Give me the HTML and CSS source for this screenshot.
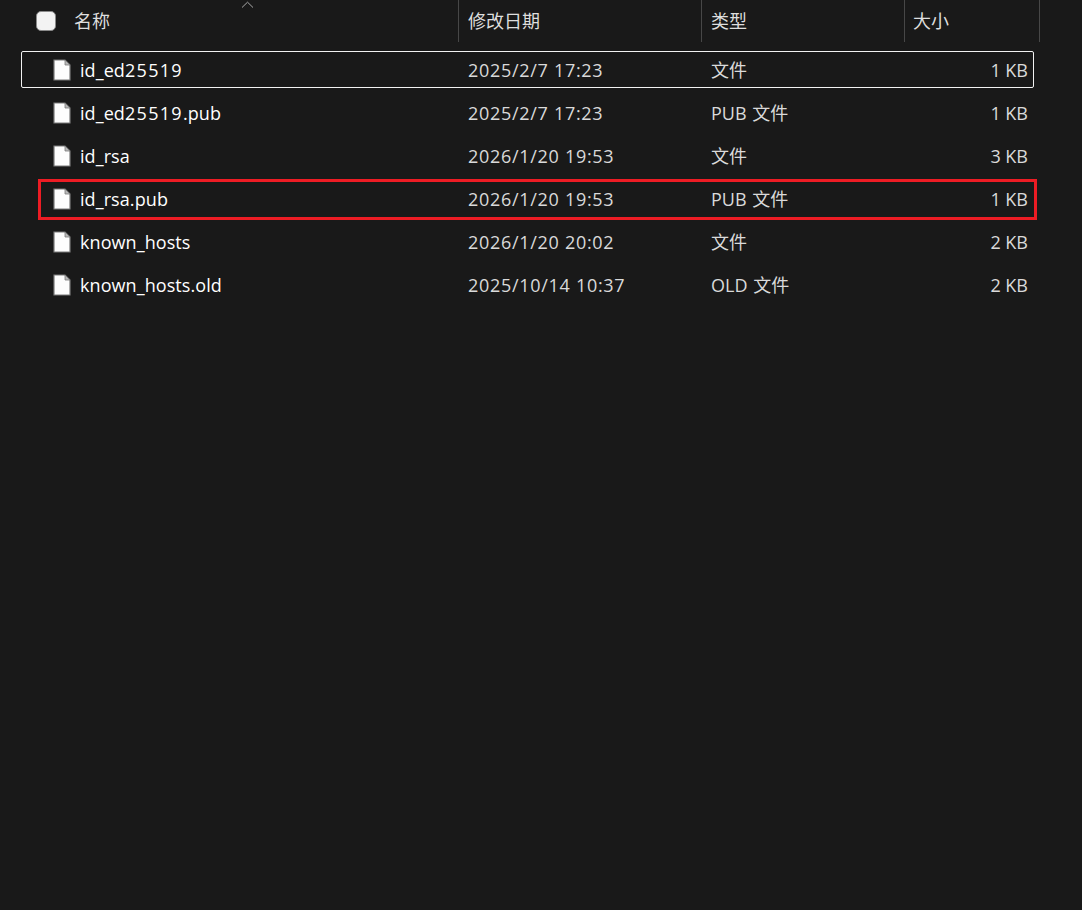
FILE: index.html
```html
<!DOCTYPE html>
<html lang="zh-CN">
<head>
<meta charset="utf-8">
<title>.ssh</title>
<link rel="stylesheet" href="styles.css">
</head>
<body>
<svg class="defs" width="0" height="0" aria-hidden="true">
  <symbol id="file" viewBox="0 0 18 22">
    <path d="M1 1H12L17 6V21H1Z" fill="#fdfdfd" stroke="#7a7a7a" stroke-width="1.2"/>
    <path d="M12 1V6H17Z" fill="#b9b9b9" stroke="#7a7a7a" stroke-width="0.8"/>
  </symbol>
</svg>
<main class="explorer">
  <header class="head">
    <div class="hcell hname">
      <span class="check"></span>
      <span>名称</span>
      <svg class="sort" width="13" height="7" viewBox="0 0 13 7"><path d="M1 6.5L6.5 1.2L12 6.5" fill="none" stroke="#a8a8a8" stroke-width="1"/></svg>
    </div>
    <div class="hcell">修改日期</div>
    <div class="hcell">类型</div>
    <div class="hcell hsize">大小</div>
  </header>
  <section class="rows">
    <div class="row focus">
      <div class="name"><svg class="ficon"><use href="#file"/></svg><span>id_ed<span class="num">25519</span></span></div>
      <div class="cell date">2025/2/7 17:23</div><div class="cell type">文件</div><div class="cell size">1 KB</div>
    </div>
    <div class="row">
      <div class="name"><svg class="ficon"><use href="#file"/></svg><span>id_ed<span class="num">25519</span>.pub</span></div>
      <div class="cell date">2025/2/7 17:23</div><div class="cell type">PUB 文件</div><div class="cell size">1 KB</div>
    </div>
    <div class="row">
      <div class="name"><svg class="ficon"><use href="#file"/></svg><span>id_rsa</span></div>
      <div class="cell date">2026/1/20 19:53</div><div class="cell type">文件</div><div class="cell size">3 KB</div>
    </div>
    <div class="row marked">
      <div class="name"><svg class="ficon"><use href="#file"/></svg><span>id_rsa.pub</span></div>
      <div class="cell date">2026/1/20 19:53</div><div class="cell type">PUB 文件</div><div class="cell size">1 KB</div>
      <span class="redbox"></span>
    </div>
    <div class="row">
      <div class="name"><svg class="ficon"><use href="#file"/></svg><span>known_hosts</span></div>
      <div class="cell date">2026/1/20 20:02</div><div class="cell type">文件</div><div class="cell size">2 KB</div>
    </div>
    <div class="row">
      <div class="name"><svg class="ficon"><use href="#file"/></svg><span>known_hosts.old</span></div>
      <div class="cell date">2025/10/14 10:37</div><div class="cell type">OLD 文件</div><div class="cell size">2 KB</div>
    </div>
  </section>
</main>
</body>
</html>
```
FILE: styles.css
```css
* { box-sizing: border-box; }
html, body { margin: 0; height: 100%; }
body {
  background: #191919;
  color: #dadada;
  font-family: "Open Sans", "Noto Sans CJK SC", sans-serif;
  font-size: 18px;
  overflow: hidden;
}
.defs { position: absolute; }
.explorer { height: 910px; }
.head {
  display: grid;
  grid-template-columns: 459px 243px 203px 135px;
  height: 42px;
}
.hcell {
  display: flex;
  align-items: center;
  padding-left: 9px;
  padding-bottom: 3px;
  border-right: 1px solid #474747;
  color: #dedede;
}
.hsize { padding-left: 8px; }
.hname { position: relative; padding-left: 36px; gap: 18px; }
.check {
  width: 20px;
  height: 20px;
  margin-top: 3px;
  background: #f3f3f3;
  border: 1px solid #8a8a8a;
  border-radius: 5px;
}
.sort { position: absolute; left: 241px; top: 1px; }
.rows {
  display: flex;
  flex-direction: column;
  gap: 6px;
  margin: 9px 0 0 21px;
  width: 1013px;
}
.row {
  position: relative;
  display: grid;
  grid-template-columns: 437px 243px 203px 128px;
  height: 37px;
  border: 1px solid transparent;
  border-radius: 2px;
  align-items: center;
}
.row.focus { border-color: #f2f2f2; }
.name {
  display: flex;
  align-items: center;
  gap: 9px;
  padding-left: 31px;
  color: #fff;
  letter-spacing: 0.08px;
}
.num { letter-spacing: 1.3px; }
.ficon { width: 18px; height: 22px; flex: none; }
.cell { padding-left: 9px; }
.date { letter-spacing: 0.7px; }
.type { padding-bottom: 2px; word-spacing: 1px; }
.size { padding: 0 5px 0 0; text-align: right; }
.redbox {
  position: absolute;
  left: 16px;
  top: -2px;
  width: 999px;
  height: 41px;
  border: 3px solid #ed1c24;
}
```
